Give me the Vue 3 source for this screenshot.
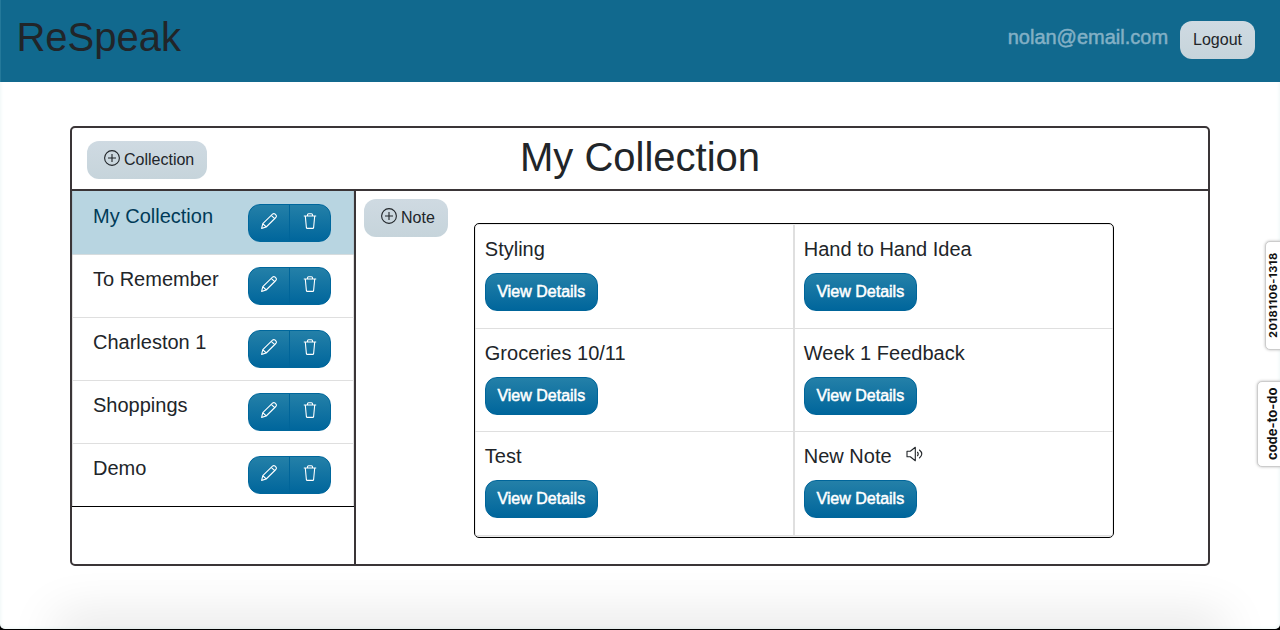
<script setup>
const collections = ['My Collection', 'To Remember', 'Charleston 1', 'Shoppings', 'Demo']
const notes = [
  { title: 'Styling' },
  { title: 'Hand to Hand Idea' },
  { title: 'Groceries 10/11' },
  { title: 'Week 1 Feedback' },
  { title: 'Test' },
  { title: 'New Note', audio: true }
]
</script>

<template>
  <div class="page">
    <header class="topbar">
      <h1 class="brand">ReSpeak</h1>
      <div class="account">
        <span class="email">nolan@email.com</span>
        <button class="btn light">Logout</button>
      </div>
    </header>

    <main class="panel">
      <div class="panel-head">
        <button class="btn light add">
          <svg class="plus" viewBox="0 0 16 16"><circle cx="8" cy="8" r="7.4" /><path d="M4 8h8M8 4v8" /></svg>Collection
        </button>
        <h2 class="title">My Collection</h2>
        <span></span>
      </div>
      <div class="panel-body">
        <aside class="sidebar">
          <ul class="list">
            <li v-for="(name, i) in collections" :key="name" class="item" :class="{ active: i === 0 }">
              <span class="name">{{ name }}</span>
              <div class="group">
                <button class="tool">
                  <svg viewBox="0 0 16 16"><path d="M.6 15.4 1.8 10.6 11.5 1.2Q12.8 0 14.2 1.2L14.8 1.8Q16 3.2 14.8 4.5L5.2 14ZM1.8 10.6 5.2 14M10.3 2.4 13.6 5.7" /></svg>
                </button>
                <button class="tool">
                  <svg viewBox="0 0 16 16"><path d="M1.8 3H14.2M5.5 3V1.7Q5.5.7 6.5.7H9.5Q10.5.7 10.5 1.7V3M3.3 3 4.4 14.7Q4.5 15.4 5.3 15.4H10.7Q11.5 15.4 11.6 14.7L12.7 3" /></svg>
                </button>
              </div>
            </li>
          </ul>
        </aside>
        <section class="content">
          <button class="btn light add">
            <svg class="plus" viewBox="0 0 16 16"><circle cx="8" cy="8" r="7.4" /><path d="M4 8h8M8 4v8" /></svg>Note
          </button>
          <div class="notes">
            <article v-for="note in notes" :key="note.title" class="note">
              <h3 class="note-title">
                {{ note.title }}
                <svg v-if="note.audio" class="speaker" viewBox="0 0 17 16"><path d="M1 5.2H4.3L9.3 1.3V14.7L4.3 10.8H1ZM11.3 5.8Q13.2 8 11.3 10.2M13.2 3.8Q18.4 8 13.2 12.2" /></svg>
              </h3>
              <button class="btn primary">View Details</button>
            </article>
          </div>
        </section>
      </div>
    </main>

    <div class="tag build">20181106-1318</div>
    <div class="tag todo">code-to-do</div>
    <div class="floor"></div>
  </div>
</template>

<style>
body {
  margin: 0;
  background: #000;
}
</style>

<style scoped>
.page {
  position: relative;
  box-sizing: border-box;
  height: 629px;
  overflow: hidden;
  background: #fff;
  border-radius: 0 0 5px 5px;
  color: #212529;
  font-family: "Liberation Sans", Arial, sans-serif;
  font-size: 16px;
  line-height: 24px;
  box-shadow: inset 0 0 4px #e6f3f3;
}
.topbar {
  display: flex;
  justify-content: space-between;
  box-sizing: border-box;
  height: 82px;
  padding: 13px 25px 0 15.4px;
  background: #11698e;
  border-left: 1px solid #24799a;
}
.brand,
.title {
  margin: 0;
  font-size: 40px;
  line-height: 48px;
  font-weight: 400;
}
.account {
  display: flex;
  align-items: flex-start;
  gap: 12px;
  padding-top: 8px;
}
.email {
  padding-top: 4px;
  font-size: 20px;
  color: #83b0c5;
  -webkit-text-stroke: 0.5px #83b0c5;
}
.btn {
  box-sizing: border-box;
  height: 38px;
  padding: 0 12px;
  border: 1px solid transparent;
  border-radius: 12px;
  font: 16px/36px "Liberation Sans", Arial, sans-serif;
  color: #212529;
  white-space: nowrap;
}
.light {
  background: linear-gradient(#cfdae2, #c6d4db) border-box;
}
.add {
  display: flex;
  padding-left: 16px;
}
.plus {
  width: 16px;
  height: 16px;
  margin: 8px 4px 0 0;
}
svg {
  display: block;
  fill: none;
  stroke: currentColor;
  stroke-width: 1.1;
  stroke-linejoin: round;
}
.primary {
  width: 113px;
  padding: 0;
  border-color: #00659a;
  background: linear-gradient(#2480a8, #00669c);
  color: #fff;
  -webkit-text-stroke: 0.5px #fff;
}
.panel {
  display: flex;
  flex-direction: column;
  box-sizing: border-box;
  width: 1140px;
  height: 440px;
  margin: 44px auto 0;
  border: 2px solid #3a3537;
  border-radius: 5px;
}
.panel-head {
  display: grid;
  grid-template-columns: 1fr auto 1fr;
  align-items: start;
  box-sizing: border-box;
  height: 63px;
  padding: 5px 15px 0;
  border-bottom: 2px solid #3a3537;
}
.panel-head .add {
  justify-self: start;
  margin-top: 8px;
}
.panel-body {
  display: flex;
  flex: 1;
}
.sidebar {
  box-sizing: border-box;
  width: 284px;
  border-right: 2px solid #3a3537;
}
.list {
  margin: 0;
  padding: 0;
  list-style: none;
  border-bottom: 1px solid #000;
}
.item {
  display: flex;
  justify-content: space-between;
  box-sizing: border-box;
  height: 63px;
  padding: 12px 22px 0 20px;
  border: 1px solid #dfdfdf;
  border-top: 0;
}
.item:last-child {
  border-bottom: 0;
  height: 62px;
}
.item:first-child {
  height: 64px;
  padding-top: 13px;
}
.active {
  background: #b8d5e1;
  border-color: #b0c8d2 #b0c8d2 #d6dcde;
  color: #003b58;
}
.name {
  font-size: 20px;
}
.group {
  display: flex;
  box-sizing: border-box;
  width: 83px;
  height: 38px;
  overflow: hidden;
  border: 1px solid #00679c;
  border-radius: 12px;
  background: linear-gradient(#2480a8, #00669c);
}
.tool {
  display: flex;
  justify-content: center;
  flex: 1;
  padding: 8px 0 0;
  border: 0;
  background: none;
  color: #fff;
}
.tool + .tool {
  border-left: 1px solid #00659a;
}
.tool svg {
  width: 16px;
  height: 16px;
}
.content {
  display: flex;
  flex: 1;
  align-items: flex-start;
  padding: 8px 0 0 8px;
}
.notes {
  display: grid;
  grid-template-columns: 319px 319px;
  grid-template-rows: 104px 103px 104px;
  box-sizing: border-box;
  width: 640px;
  height: 315px;
  margin: 24px 0 0 26px;
  padding-top: 1px;
  overflow: hidden;
  border: 1px solid #000;
  border-radius: 5px;
  box-shadow: inset 0 0 0 1px #ececec;
}
.note {
  box-sizing: border-box;
  padding: 12px 10px 0;
  border-bottom: 1px solid #dfdfdf;
}
.note:nth-child(odd) {
  border-right: 1px solid #dfdfdf;
}
.note:nth-child(even) {
  border-left: 1px solid #dfdfdf;
  padding-left: 9px;
}
.note-title {
  display: flex;
  margin: 0 0 12px;
  font-size: 20px;
  line-height: 24px;
  font-weight: 400;
}
.speaker {
  width: 17px;
  height: 16px;
  margin: 2px 0 0 14px;
}
.tag {
  position: absolute;
  right: -5px;
  box-sizing: border-box;
  border: 1px solid #ccc;
  border-radius: 5px;
  background: #fff;
  box-shadow: 0 0 3px #bbb;
  color: #111;
  font-family: Inter, sans-serif;
  font-weight: 700;
  text-align: center;
  writing-mode: vertical-rl;
  transform: rotate(180deg);
}
.build {
  top: 241px;
  width: 20px;
  height: 109px;
  padding: 0 0 0 5px;
  font-size: 11px;
  line-height: 14px;
  letter-spacing: 0.5px;
}
.todo {
  top: 381px;
  width: 28px;
  height: 86px;
  padding: 0 4px 0 1px;
  font-size: 13px;
  line-height: 20px;
}
.floor {
  position: absolute;
  left: 68px;
  right: 68px;
  bottom: -10px;
  height: 10px;
  box-shadow: 0 0 50px 12px rgba(0, 0, 0, 0.12);
}
</style>
